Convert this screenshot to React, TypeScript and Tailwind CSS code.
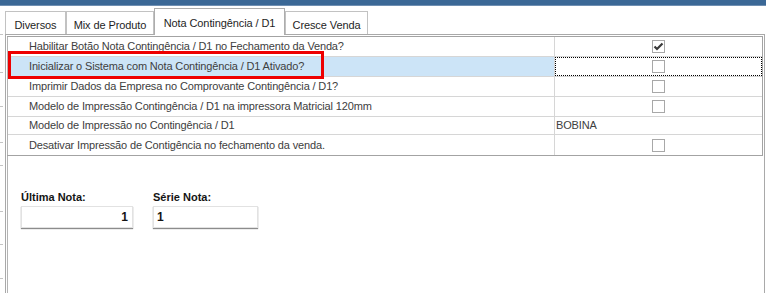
import React from "react";

type Row = {
  label: string;
  kind: "check" | "text";
  checked?: boolean;
  text?: string;
  selected?: boolean;
  short?: boolean;
};

const ROWS: Row[] = [
  { label: "Habilitar Botão Nota Contingência / D1 no Fechamento da Venda?", kind: "check", checked: true },
  { label: "Inicializar o Sistema com Nota Contingência / D1 Ativado?", kind: "check", selected: true },
  { label: "Imprimir Dados da Empresa no Comprovante Contingência / D1?", kind: "check" },
  { label: "Modelo de Impressão Contingência / D1 na impressora Matricial 120mm", kind: "check" },
  { label: "Modelo de Impressão no Contingência / D1", kind: "text", text: "BOBINA", short: true },
  { label: "Desativar Impressão de Contigência no fechamento da venda.", kind: "check" },
];

const TABS = [
  { label: "Diversos", w: "w-[61px]" },
  { label: "Mix de Produto", w: "w-[88px]" },
  { label: "Nota Contingência / D1", w: "w-[131px]", active: true },
  { label: "Cresce Venda", w: "w-[83px]" },
];

function CheckBox({ checked }: { checked?: boolean }) {
  return (
    <div className="w-[13px] h-[13px] border border-[#a8a8a8] bg-white flex items-center justify-center">
      {checked && (
        <svg width="11" height="11" viewBox="0 0 11 11">
          <path d="M1.5 5.5 L4 8 L9.5 2.5" fill="none" stroke="#3a3a3a" strokeWidth="2.2" />
        </svg>
      )}
    </div>
  );
}

export default function App() {
  return (
    <div className="w-[766px] h-[293px] bg-white overflow-hidden text-[11px] font-['Liberation_Sans',sans-serif]">
      {/* title strip */}
      <div className="h-[6px] bg-[#3b6896] border-b border-[#6f8fb2]" />

      <div className="flex">
        {/* left ruler */}
        <div className="w-[5px] flex flex-col">
          <div className="mt-[28px] h-px w-[3px] bg-[#c4c4c4]" />
          <div className="mt-[37px] h-px w-[3px] bg-[#c4c4c4]" />
          <div className="mt-[33px] h-px w-[3px] bg-[#c4c4c4]" />
          <div className="mt-[35px] h-px w-[3px] bg-[#c4c4c4]" />
          <div className="mt-[22px] h-px w-[3px] bg-[#c4c4c4]" />
          <div className="mt-[45px] h-px w-[3px] bg-[#c4c4c4]" />
          <div className="mt-[32px] h-px w-[3px] bg-[#c4c4c4]" />
          <div className="mt-[33px] h-px w-[3px] bg-[#c4c4c4]" />
        </div>

        <div className="w-[760px] flex flex-col">
          {/* tabs */}
          <div className="h-[28px] flex items-end tracking-[-0.1px] text-[#1e1e1e]">
            {TABS.map((t) =>
              t.active ? (
                <div
                  key={t.label}
                  className={`${t.w} h-[27px] -mb-px relative z-10 bg-white border-t border-l border-r border-[#adadad] flex justify-center pt-[6px]`}
                >
                  {t.label}
                </div>
              ) : (
                <div
                  key={t.label}
                  className={`${t.w} h-[23px] bg-white border-t border-l border-r border-[#c2c2c2] flex justify-center pt-[5px]`}
                >
                  {t.label}
                </div>
              )
            )}
          </div>

          {/* tab page */}
          <div className="h-[259px] border-t border-l border-r border-[#a9a9a9] p-px pb-0 flex flex-col">
            <div className="flex-1 border-l border-[#b4b4b4] flex flex-col">
              {/* grid */}
              <div className="border-t border-r border-b border-[#a3a3a3] -ml-px pl-px text-[#404040] tracking-[-0.15px]">
                {ROWS.map((r, i) => (
                  <div
                    key={r.label}
                    className={`flex ${r.short ? "h-[18px]" : "h-[20px]"} ${
                      i < ROWS.length - 1 ? "border-b border-[#d6d6d6]" : ""
                    }`}
                  >
                    <div
                      className={`relative w-[547px] border-r border-[#d6d6d6] pl-[21px] flex items-center ${
                        r.selected ? "bg-[#cce4f7]" : ""
                      }`}
                    >
                      {r.label}
                      {r.selected && (
                        <div className="absolute left-0 top-[-6px] w-[316px] h-[28px] border-[3px] border-[#ee0000]" />
                      )}
                    </div>
                    <div
                      className={`flex-1 flex items-center ${
                        r.kind === "check" ? "justify-center" : "pl-[1px]"
                      } ${r.selected ? "border border-dotted border-black" : ""}`}
                    >
                      {r.kind === "check" ? <CheckBox checked={r.checked} /> : r.text}
                    </div>
                  </div>
                ))}
              </div>

              {/* note fields */}
              <div className="flex gap-[20px] pl-[13px] mt-[34px] text-[#141414]">
                <div className="w-[112px] flex flex-col gap-[2px]">
                  <span className="font-bold leading-[14px]">Última Nota:</span>
                  <div className="h-[22px] border border-[#e2e2e2] shadow-[0_1px_1px_rgba(0,0,0,0.45)] flex items-center justify-end pr-[4px] font-bold text-[12px]">
                    1
                  </div>
                </div>
                <div className="w-[105px] flex flex-col gap-[2px]">
                  <span className="font-bold leading-[14px]">Série Nota:</span>
                  <div className="h-[22px] border border-[#e2e2e2] shadow-[0_1px_1px_rgba(0,0,0,0.45)] flex items-center pl-[3px] font-bold text-[12px]">
                    1
                  </div>
                </div>
              </div>
            </div>
          </div>
        </div>
      </div>
    </div>
  );
}
